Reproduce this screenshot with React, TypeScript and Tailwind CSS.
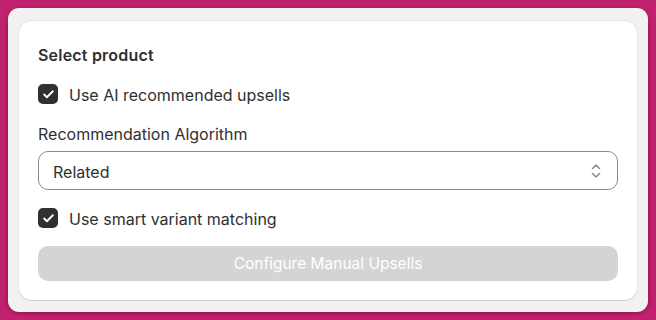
import { Check } from "lucide-react";

const CheckRow = ({ label }: { label: string }) => (
  <label className="flex items-center gap-[11px] h-[20px]">
    <span className="size-[20px] rounded-[5px] bg-[#303030] flex items-center justify-center">
      <Check className="size-[13px] text-white" strokeWidth={3.5} />
    </span>
    <span className="text-[16px] leading-[20px] text-[#303030] pt-[1px]">{label}</span>
  </label>
);

const App = () => {
  return (
    <div
      className="w-[656px] h-[320px] bg-[#c2216f] p-[8px]"
      style={{ fontFamily: "Inter, 'Noto Sans', sans-serif" }}
    >
      <div className="h-full bg-[#f1f1f1] rounded-[11px] px-[11px] pt-[13px] pb-[12px] shadow-[0_1px_4px_rgba(60,0,20,0.45)]">
        <div className="h-full bg-white rounded-[13px] px-[19px] pt-[24px] pb-[19px] shadow-[0_1px_0_#d0d0d0,0_0_0_1px_#e6e6e6] flex flex-col">
          <div className="text-[16px] leading-[20px] font-semibold text-[#303030] tracking-[0.2px]">
            Select product
          </div>
          <div className="mt-[19px]">
            <CheckRow label="Use AI recommended upsells" />
          </div>
          <div className="mt-[20px] h-[20px] text-[16px] leading-[20px] text-[#303030]">
            Recommendation Algorithm
          </div>
          <div className="mt-[7px] h-[39px] rounded-[10px] border border-[#8a8a8a] flex items-center justify-between pl-[14px] pr-[15px]">
            <span className="text-[16px] leading-[20px] pt-[2px] text-[#303030]">Related</span>
            <svg width="12" height="16" viewBox="0 0 12 16" fill="none" stroke="#8a8a8a" strokeWidth="1.5" strokeLinecap="round" strokeLinejoin="round">
              <path d="M2.5 5.5 6 2l3.5 3.5" />
              <path d="M2.5 10.5 6 14l3.5-3.5" />
            </svg>
          </div>
          <div className="mt-[18px]">
            <CheckRow label="Use smart variant matching" />
          </div>
          <button className="mt-[18px] h-[35px] rounded-[10px] bg-[#d4d4d4] text-white text-[15.5px] pt-[1px] w-full">
            Configure Manual Upsells
          </button>
        </div>
      </div>
    </div>
  );
};

export default App;
